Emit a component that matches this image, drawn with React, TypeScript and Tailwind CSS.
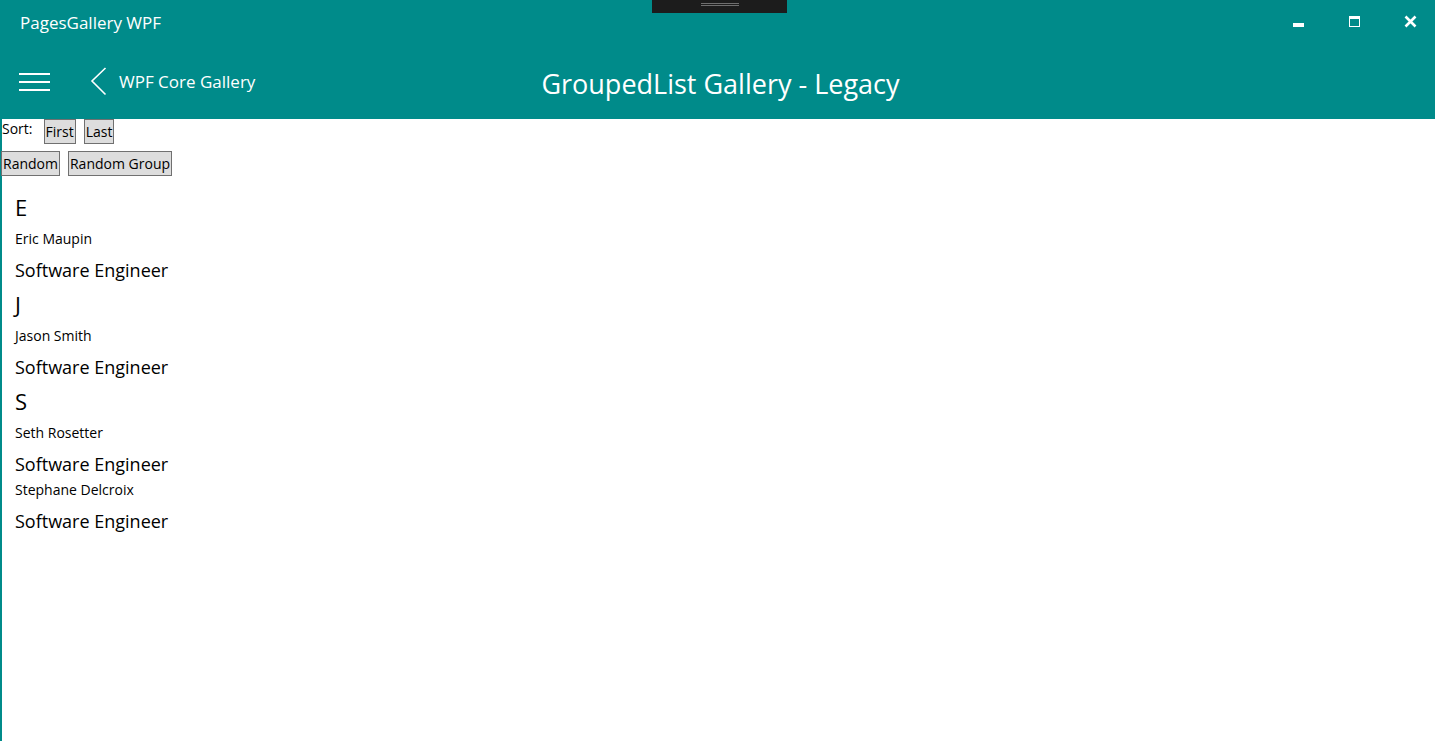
const font = { fontFamily: '"Open Sans", "Noto Sans", sans-serif' };

type Person = { name: string; title: string };

const groups: { key: string; people: Person[] }[] = [
  { key: "E", people: [{ name: "Eric Maupin", title: "Software Engineer" }] },
  { key: "J", people: [{ name: "Jason Smith", title: "Software Engineer" }] },
  {
    key: "S",
    people: [
      { name: "Seth Rosetter", title: "Software Engineer" },
      { name: "Stephane Delcroix", title: "Software Engineer" },
    ],
  },
];

function WinButton({ children }: { children: string }) {
  return (
    <button className="h-[25px] px-[1px] bg-[#dddddd] border border-[#707070] text-[14px] leading-[23px] text-black">
      {children}
    </button>
  );
}

export default function App() {
  return (
    <div className="w-[1435px] h-[741px] overflow-hidden bg-white flex flex-col" style={font}>
      {/* TITLE BAR */}
      <div className="relative h-[45px] bg-[#008b8a] flex items-center text-white">
        <div className="pl-[20px] text-[17px] leading-none -mt-[1px]">PagesGallery WPF</div>
        <div className="absolute left-[652px] top-0 w-[135px] h-[13px] bg-[#1c1c1c] flex flex-col items-center pt-[3px] gap-[1px]">
          <div className="w-[38px] h-[1px] bg-[#6e6e6e]" />
          <div className="w-[38px] h-[1px] bg-[#6e6e6e]" />
        </div>
        <div className="ml-auto -mr-[3px] flex items-center h-full">
          <div className="w-[56px] flex justify-center pt-[1px]">
            <div className="w-[11px] h-[4px] bg-white mt-[4px]" />
          </div>
          <div className="w-[56px] flex justify-center">
            <div className="w-[11px] h-[11px] border border-white border-t-[3px] -mt-[3px]" />
          </div>
          <div className="w-[56px] flex justify-center -mt-[3px]">
            <svg width="13" height="13" viewBox="0 0 13 13">
              <path d="M1.5 1.5 L11.5 11.5 M11.5 1.5 L1.5 11.5" stroke="white" strokeWidth="2.6" />
            </svg>
          </div>
        </div>
      </div>

      {/* HEADER */}
      <div className="relative h-[74px] bg-[#008b8a] flex items-center text-white">
        <div className="pl-[19px] flex flex-col gap-[6px] mt-[-1px]">
          <div className="w-[31px] h-[2px] bg-white" />
          <div className="w-[31px] h-[2px] bg-white" />
          <div className="w-[31px] h-[2px] bg-white" />
        </div>
        <svg className="ml-[40px] -mt-[1px]" width="17" height="29" viewBox="0 0 17 29">
          <path d="M15.5 1 L2 14 L15.5 27.5" stroke="white" strokeWidth="1.6" fill="none" />
        </svg>
        <div className="ml-[12px] text-[17px] leading-none -mt-[1px]">WPF Core Gallery</div>
        <div className="absolute inset-x-0 top-0 h-full flex items-center justify-center pointer-events-none">
          <div className="text-[27px] leading-none ml-[6px] mt-[2px]">GroupedList Gallery - Legacy</div>
        </div>
      </div>

      {/* CONTENT */}
      <div className="flex-1 border-l-2 border-[#008b8a] text-black">
        <div className="flex items-start h-[25px]">
          <span className="text-[14px] leading-[20px] pr-[11px]">Sort:</span>
          <div className="flex gap-[8px]">
            <WinButton>First</WinButton>
            <WinButton>Last</WinButton>
          </div>
        </div>
        <div className="flex gap-[8px] mt-[7px] -ml-[1px]">
          <WinButton>Random</WinButton>
          <WinButton>Random Group</WinButton>
        </div>

        <div className="mt-[10px] pl-[13px]">
          {groups.map((g) => (
            <div key={g.key}>
              <div className="pt-[6px] pb-[4px] text-[22px] leading-[30px]">{g.key}</div>
              {g.people.map((p) => (
                <div key={p.name}>
                  <div className="py-[3px] text-[14px] leading-[20px]">{p.name}</div>
                  <div className="pt-[5px] text-[18px] leading-[26px]">{p.title}</div>
                </div>
              ))}
            </div>
          ))}
        </div>
      </div>
    </div>
  );
}
